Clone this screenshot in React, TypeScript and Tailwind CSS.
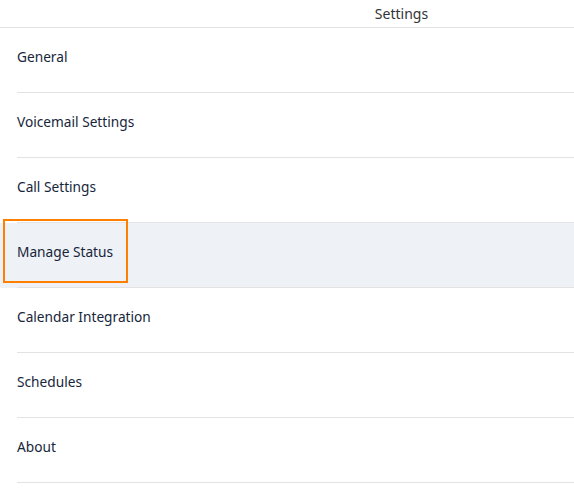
const items = [
  'General',
  'Voicemail Settings',
  'Call Settings',
  'Manage Status',
  'Calendar Integration',
  'Schedules',
  'About',
];

export default function App() {
  return (
    <div className="min-h-screen bg-white font-['Noto_Sans',sans-serif]">
      <div className="flex h-[28px] items-center border-b border-[#e3e3e3] pl-[229px]">
        <div className="flex-1 text-center text-[14px] text-[#333333]">Settings</div>
      </div>
      <ul>
        {items.map((item) => {
          const active = item === 'Manage Status';
          return (
            <li key={item} className={active ? 'relative bg-[#eef1f6]' : 'relative'}>
              <div className="ml-[17px] flex h-[65px] items-center border-b border-[#e3e3e3] pb-[6px] text-[13.7px] text-[#16263a]">
                {item}
              </div>
              {active && (
                <div className="pointer-events-none absolute left-[3px] top-[-4px] h-[64px] w-[125px] border-2 border-[#ff8000]" />
              )}
            </li>
          );
        })}
      </ul>
    </div>
  );
}
